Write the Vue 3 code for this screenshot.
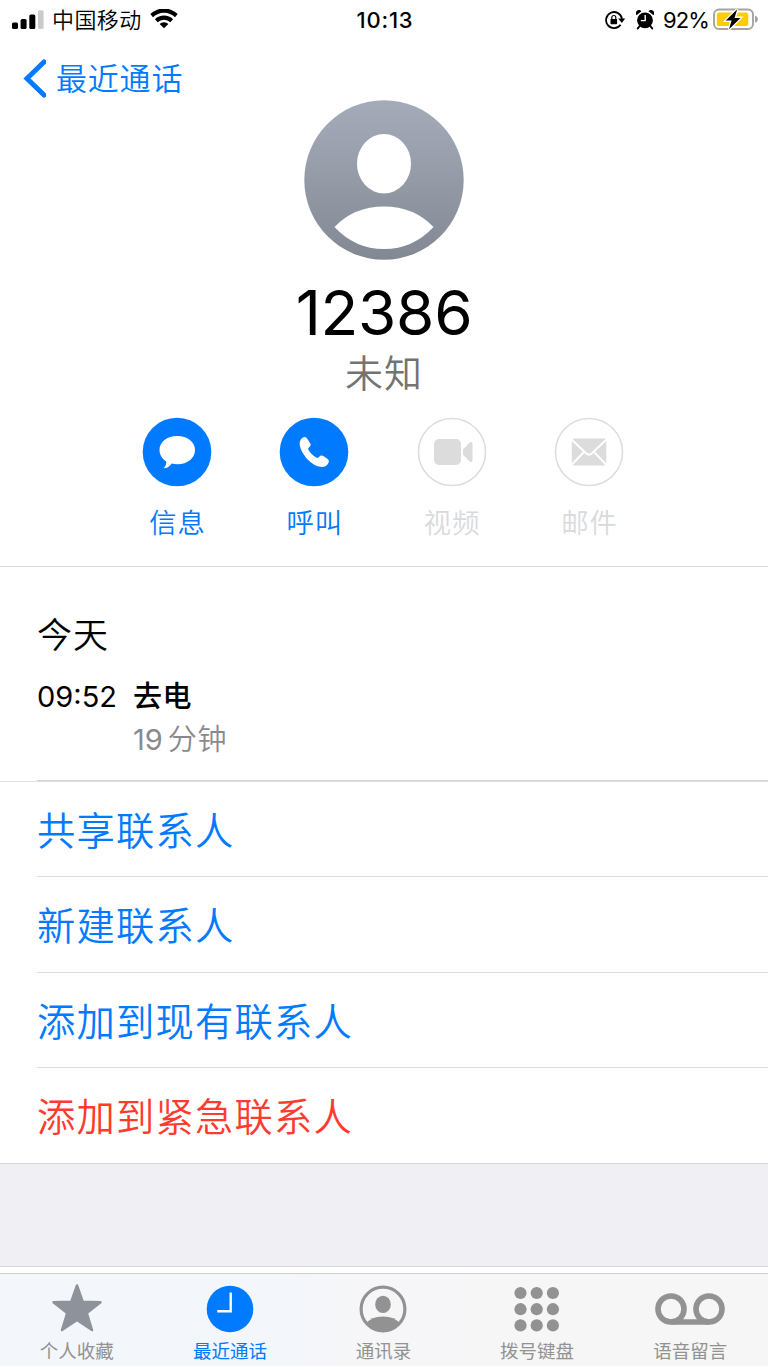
<script setup>
const logActions = [
  { label: '共享联系人' },
  { label: '新建联系人' },
  { label: '添加到现有联系人' },
  { label: '添加到紧急联系人', danger: true },
]
const dots = [0, 1, 2].flatMap((r) => [0, 1, 2].map((c) => ({ x: 6.5 + c * 16.2, y: 6.5 + r * 16.2 })))
</script>

<template>
  <div class="screen">
    <header class="status">
      <div class="status-left">
        <svg class="signal" width="32" height="20" viewBox="0 0 32 20">
          <rect x="0" y="12.5" width="6" height="6.5" rx="1.6" />
          <rect x="8.6" y="9" width="6" height="10" rx="1.6" />
          <rect x="17.3" y="4.5" width="6" height="14.5" rx="1.6" />
          <rect x="26" y="0.2" width="5.6" height="18.8" rx="1.6" fill="#cbcbcb" />
        </svg>
        <span class="carrier">中国移动</span>
        <svg class="wifi" width="28" height="20" viewBox="0 0 28 20">
          <path d="M0.3 5.1 A19.5 19.5 0 0 1 27.7 5.1 L25 8.2 A15.6 15.6 0 0 0 3 8.2 Z" />
          <path d="M4.9 10.2 A12.9 12.9 0 0 1 23.1 10.2 L20.3 13.3 A9.1 9.1 0 0 0 7.7 13.3 Z" />
          <path d="M9.6 15 A6.3 6.3 0 0 1 18.4 15 L14 19.3 Z" />
        </svg>
      </div>
      <div class="clock">10:13</div>
      <div class="status-right">
        <svg class="lock" width="21" height="18" viewBox="0 0 21 18">
          <path d="M15.600 13.7 A8 8 0 1 1 17 8" fill="none" stroke="#000" stroke-width="1.8" />
          <path d="M13.2 7.6 H20.2 L16.8 12 Z" />
          <rect x="5.5" y="8" width="6.6" height="5.2" rx="0.6" />
          <path d="M6.8 8.5 V6.5 A2 2 0 0 1 10.8 6.5 V8.5" fill="none" stroke="#000" stroke-width="1.2" />
        </svg>
        <svg class="alarm" width="18" height="20" viewBox="0 0 18 20">
          <circle cx="9" cy="10.3" r="7.9" />
          <path d="M0.5 5.3 A3 3 0 0 1 5.5 1.3 Z M17.5 5.3 A3 3 0 0 0 12.5 1.3 Z" />
          <path d="M3.7 16 L1.8 18.4 M14.3 16 L16.2 18.4" stroke="#000" stroke-width="2" stroke-linecap="round" />
          <path d="M9.2 5 V10.6 H4.8" fill="none" stroke="#fff" stroke-width="1.4" />
        </svg>
        <span class="percent">92%</span>
        <svg class="battery" width="45" height="24" viewBox="0 0 45 24">
          <rect x="1" y="1.5" width="39" height="19.5" rx="5" fill="none" stroke="#a3a3a3" stroke-width="1.9" />
          <path d="M42 7.8 Q44.8 8.500 44.8 11.3 Q44.8 14.1 42 14.8 Z" fill="#a3a3a3" />
          <rect x="3.8" y="4.4" width="31.5" height="13.7" rx="2.6" fill="#ffcc00" />
          <path d="M24.2 1.3 L12.8 12.6 H18.6 L16 21.3 L27.5 9.9 H21.5 Z" fill="#000" stroke="#fff" stroke-width="2.6" paint-order="stroke" />
        </svg>
      </div>
    </header>

    <nav class="nav">
      <svg width="24" height="40" viewBox="0 0 24 40">
        <path d="M22 3 L5 19.500 L22 36" fill="none" stroke="#007aff" stroke-width="5" stroke-linecap="round" />
      </svg>
      <span>最近通话</span>
    </nav>

    <section class="hero">
      <svg class="avatar" width="160" height="160" viewBox="0 0 160 160">
        <defs>
          <linearGradient id="avatarFill" x1="0" y1="0" x2="0" y2="1">
            <stop offset="0" stop-color="#a5abb9" />
            <stop offset="1" stop-color="#838993" />
          </linearGradient>
        </defs>
        <circle cx="80" cy="80" r="79.7" fill="url(#avatarFill)" />
        <ellipse cx="80" cy="63.7" rx="27" ry="29.7" fill="#fff" />
        <path d="M30.5 127 Q50 106.500 80 106.500 Q110 106.500 129.500 127 Q109 149 80 149 Q51 149 30.500 127 Z" fill="#fff" />
      </svg>
      <h1>12386</h1>
      <p class="sub">未知</p>
      <div class="actions">
        <div class="action">
          <svg width="70" height="70" viewBox="0 0 70 70">
            <circle cx="35" cy="35" r="34.3" fill="#007aff" />
            <path d="M35.200 19 C45.500 19 53 24.900 53 33 C53 41.200 45.500 47.200 35.500 47.200 C33.500 47.200 31.500 47 29.700 46.500 C27.500 49.500 25 51.200 22.500 51.200 C22 51.200 21.900 50.600 22.300 50.200 C24 48.500 24.500 46.500 24 44.200 C19.800 41.700 17.500 37.500 17.500 33 C17.500 24.900 25 19 35.200 19 Z" fill="#fff" />
          </svg>
          <span>信息</span>
        </div>
        <div class="action">
          <svg width="70" height="70" viewBox="0 0 70 70">
            <circle cx="35" cy="35" r="34.3" fill="#007aff" />
            <path d="M23.500 20.700 C25.400 19.400 27.300 20 28.600 22.200 L31.400 26.700 C32 28 31.500 29 29.900 30.500 C29.100 31.300 29 32.100 29.500 33 C31.500 36.300 34 38.700 37.200 40.600 C38.200 41.200 39 41 39.800 40.100 C41.400 38.300 42.600 37.900 44.300 39 L48.300 41.700 C50.200 43 50.400 44.800 49 46.700 C47.300 49.200 44.500 50.300 41 49.800 C35.500 49 29 44.200 24.800 37.500 C20.300 30.500 19 23.800 23.500 20.700 Z" fill="#fff" />
          </svg>
          <span>呼叫</span>
        </div>
        <div class="action disabled">
          <svg width="70" height="70" viewBox="0 0 70 70">
            <circle cx="35" cy="35" r="33.500" fill="#fff" stroke="#dcdcdd" stroke-width="1.500" />
            <rect x="17" y="22" width="27" height="26" rx="5" fill="#dcdcdc" />
            <path d="M46 32.200 L52.500 25.800 Q55.500 23.500 55.500 27 V43 Q55.500 46.500 52.500 44.200 L46 37.800 Z" fill="#dcdcdc" />
          </svg>
          <span>视频</span>
        </div>
        <div class="action disabled">
          <svg width="70" height="70" viewBox="0 0 70 70">
            <circle cx="35" cy="35" r="33.500" fill="#fff" stroke="#dcdcdd" stroke-width="1.500" />
            <rect x="17.800" y="21.500" width="34.500" height="27" rx="2" fill="#dcdcdc" />
            <path d="M17 22 L32.300 36.500 Q35 38.900 37.700 36.500 L53 22 M17 48.500 L29.500 35.500 M53 48.500 L40.500 35.500" fill="none" stroke="#fff" stroke-width="1.900" />
          </svg>
          <span>邮件</span>
        </div>
      </div>
    </section>

    <section class="log">
      <h2>今天</h2>
      <div class="call">
        <time>09:52</time>
        <div class="detail">
          <strong>去电</strong>
          <span class="duration"><span class="num">19</span>分钟</span>
        </div>
      </div>
    </section>

    <ul class="list">
      <li v-for="item in logActions" :key="item.label" :class="{ danger: item.danger }">{{ item.label }}</li>
    </ul>

    <div class="filler"></div>

    <footer class="tabs">
      <div class="tab fav">
        <svg width="52" height="50" viewBox="0 0 52 50">
          <path d="M26 1.500 L31.800 17.800 L49.500 18.200 L35.800 29 L41 46 L26 36 L11 46 L16.200 29 L2.500 18.200 L20.200 17.800 Z" fill="#8e939b" stroke="#8e939b" stroke-width="2.500" stroke-linejoin="round" />
        </svg>
        <span>个人收藏</span>
      </div>
      <div class="tab active">
        <svg width="50" height="50" viewBox="0 0 50 50">
          <circle cx="25" cy="25" r="23.300" fill="#007aff" />
          <path d="M25.700 8.500 V27.200 H12.300" fill="none" stroke="#fff" stroke-width="2.400" />
        </svg>
        <span>最近通话</span>
      </div>
      <div class="tab">
        <svg width="50" height="50" viewBox="0 0 50 50">
          <defs><clipPath id="personClip"><circle cx="25" cy="25" r="22" /></clipPath></defs>
          <circle cx="25" cy="25" r="21.900" fill="none" stroke="#929292" stroke-width="3.200" />
          <ellipse cx="25" cy="20.400" rx="7.800" ry="8.700" fill="#929292" />
          <path d="M8 40 Q13 32.600 25 32.600 Q37 32.600 42 40 V50 H8 Z" fill="#929292" clip-path="url(#personClip)" />
        </svg>
        <span>通讯录</span>
      </div>
      <div class="tab">
        <svg width="46" height="50" viewBox="0 -2.500 46 50">
          <circle v-for="d in dots" :key="`${d.x}-${d.y}`" :cx="d.x" :cy="d.y" r="6.100" fill="#929292" />
        </svg>
        <span>拨号键盘</span>
      </div>
      <div class="tab">
        <svg width="72" height="50" viewBox="0 0 72 50">
          <g fill="none" stroke="#929292" stroke-width="5.600">
            <circle cx="17" cy="25" r="13" />
            <circle cx="55" cy="25" r="13" />
            <path d="M17 38 H55" />
          </g>
        </svg>
        <span>语音留言</span>
      </div>
    </footer>
  </div>
</template>

<style>
body {
  background: #fff;
}
</style>

<style scoped>
.screen {
  width: 768px;
  height: 1366px;
  display: flex;
  flex-direction: column;
  overflow: hidden;
  background: #fff;
  color: #000;
  font-family: Inter, "Noto Sans CJK SC", sans-serif;
  font-weight: 350;
  white-space: nowrap;
}
.screen * {
  box-sizing: border-box;
}
svg {
  display: block;
  flex: none;
}
h1, h2, p, ul {
  margin: 0;
  padding: 0;
  font-weight: inherit;
}
.status {
  flex: none;
  height: 40px;
  display: grid;
  grid-template-columns: 1fr auto 1fr;
  align-items: center;
  padding: 0 10px 0 12px;
  font-size: 22px;
}
.status-left,
.status-right {
  display: flex;
  align-items: center;
}
.status-right {
  justify-content: flex-end;
}
.carrier {
  margin-left: 8px;
  font-size: 22px;
  letter-spacing: 0.4px;
  line-height: 38px;
}
.wifi {
  margin-left: 8px;
  margin-bottom: 2px;
}
.clock {
  font-weight: 500;
  font-size: 22px;
  letter-spacing: 0.8px;
}
.alarm {
  margin-left: 10px;
}
.percent {
  margin-left: 9px;
  font-weight: 400;
  letter-spacing: -0.9px;
}
.battery {
  margin-left: 4px;
}
.nav {
  flex: none;
  height: 60px;
  padding: 17px 0 0 22px;
  display: flex;
  align-items: center;
  gap: 10px;
  color: #007aff;
  font-size: 31px;
  letter-spacing: 0.8px;
  line-height: 43px;
}
.hero {
  flex: none;
  height: 467px;
  display: flex;
  flex-direction: column;
  align-items: center;
  border-bottom: 1px solid #d9d9dc;
}
h1 {
  margin-top: 17px;
  height: 72px;
  line-height: 72px;
  font-size: 62px;
  font-weight: 400;
  letter-spacing: -0.3px;
}
.sub {
  height: 48px;
  line-height: 48px;
  font-size: 38px;
  letter-spacing: 1px;
  color: #737373;
}
.actions {
  display: flex;
  gap: 67.3px;
  margin: 20px 2px 0 0;
}
.action {
  width: 70px;
  display: flex;
  flex-direction: column;
  align-items: center;
  color: #007aff;
  font-size: 27.300px;
  letter-spacing: 1px;
  line-height: 40px;
}
.action span {
  margin-top: 17px;
  padding-left: 1px;
}
.disabled {
  color: #dadadd;
}
.log {
  flex: none;
  height: 214px;
  padding: 43px 0 0 37px;
  background: linear-gradient(#d4d4d7, #d4d4d7) 37px 100% / 100% 1px no-repeat;
}
h2 {
  font-size: 35px;
  line-height: 50px;
  letter-spacing: 1px;
}
.call {
  display: flex;
  align-items: flex-start;
  margin-top: 15px;
  font-size: 29px;
  line-height: 43px;
}
time {
  width: 96px;
  font-weight: 400;
}
.detail {
  display: flex;
  flex-direction: column;
}
strong {
  font-weight: 500;
  letter-spacing: 0.5px;
}
.duration {
  color: #8a8a8e;
  letter-spacing: 0.8px;
}
.num {
  margin-right: 5px;
  font-weight: 400;
  letter-spacing: 0;
}
.list {
  flex: none;
  list-style: none;
  border-top: 1px solid #dfdfe1;
  border-bottom: 1px solid #d4d4d8;
  color: #007aff;
}
li {
  height: 95.250px;
  margin-left: 37px;
  line-height: 98px;
  font-size: 38.300px;
  letter-spacing: 1.2px;
  border-bottom: 1px solid #dddde0;
}
li:last-child {
  border-bottom: 0;
}
.danger {
  color: #ff3b30;
}
.filler {
  flex: 1;
  background: #efeff4;
  border-bottom: 1px solid #d9d9dc;
}
.tabs {
  flex: none;
  height: 93px;
  margin-top: 6px;
  padding: 10px 1px 0 0;
  border-top: 1px solid #cfcfd2;
  background: linear-gradient(90deg, #f3f7fb 0, #f3f6fa 38%, #f6f6f8 46%, #f6f6f6 100%);
  display: grid;
  grid-template-columns: repeat(5, 1fr);
}
.tab {
  display: flex;
  flex-direction: column;
  align-items: center;
  color: #929292;
  font-size: 18.500px;
  font-weight: 400;
  line-height: 28px;
}
.tab span {
  margin-top: 3px;
}
.active {
  color: #007aff;
}
</style>
